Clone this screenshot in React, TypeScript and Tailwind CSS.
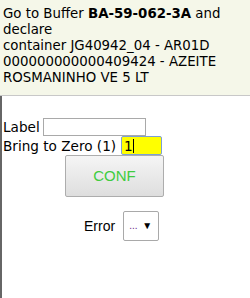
export default function App() {
  return (
    <div className="w-[250px] h-[298px] bg-white font-['DejaVu_Sans',sans-serif] text-[13.33px] leading-4 text-black flex flex-col">
      <div className="bg-[#f5f7e9] border-b border-[#c8c8c8] px-[3px] pt-[6px] pb-[9px]">
        <div>
          Go to Buffer <b>BA-59-062-3A</b> and declare
        </div>
        <div>container JG40942_04 - AR01D 000000000000409424 - AZEITE ROSMANINHO VE 5 LT</div>
      </div>
      <div className="flex-1 border-l-2 border-[#666] pl-[1px] pt-[21px] text-[13.6px]">
        <div className="flex items-center h-[19px]">
          <span>Label</span>
          <input className="ml-[3px] w-[103px] h-[18px] border border-[#a9a9a9] bg-white outline-none" />
        </div>
        <div className="flex items-center h-[19px]">
          <span>Bring to Zero (1)</span>
          <div className="ml-[5px] w-[41px] h-[19px] border border-[#7c9fd6] rounded-[2px] bg-[#ffff00] flex items-center px-[2px]">
            <span>1</span>
            <span className="w-px h-[14px] bg-black"></span>
          </div>
        </div>
        <button className="ml-[62px] w-[99px] h-[42px] border border-[#adadad] rounded-[2px] bg-gradient-to-b from-[#f5f5f5] to-[#dedede] font-['Liberation_Sans',sans-serif] text-[15px] text-[#3fcc3f]">
          CONF
        </button>
        <div className="flex items-center mt-[14px] ml-[81px] font-['Liberation_Sans',sans-serif] text-[14px]">
          <span>Error</span>
          <div className="ml-[8px] w-[36px] h-[30px] border border-[#a9a9a9] rounded-[2px] flex items-center justify-between pl-[5px] pr-[6px]">
            <span className="text-[#6a2a8a] text-[10px]">...</span>
            <span className="text-[10px]">▼</span>
          </div>
        </div>
      </div>
    </div>
  );
}
